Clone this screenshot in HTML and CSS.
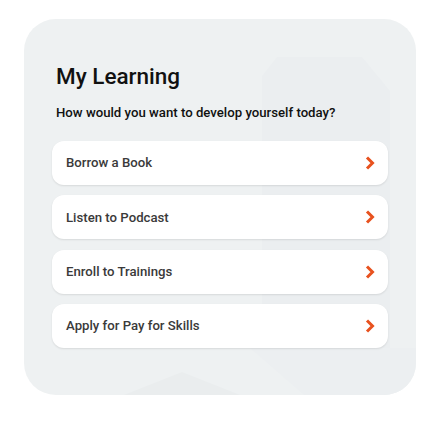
FILE: index.html
```html
<!DOCTYPE html>
<html lang="en">
<head>
<meta charset="utf-8">
<title>My Learning</title>
<link rel="stylesheet" href="styles.css">
</head>
<body>
<section class="card">
  <svg class="deco" width="392" height="376" viewBox="0 0 392 376" aria-hidden="true">
    <polygon points="238,57 253,38 338,38 366,72 366,376 300,376 238,300" fill="#ebeef0"/>
    <polygon points="100,376 158,353 216,376" fill="#eaedee"/>
    <polygon points="226,329 280,376 392,376 392,329" fill="#eceff1"/>
  </svg>
  <header class="head">
    <h1 class="title">My Learning</h1>
    <p class="subtitle">How would you want to develop yourself today?</p>
  </header>
  <ul class="list">
    <li class="item"><span class="label">Borrow a Book</span><svg class="chev" width="10" height="14" viewBox="0 0 10 14"><path d="M2 1.5 L7.5 7 L2 12.5" fill="none" stroke="#e8521f" stroke-width="3" stroke-linejoin="miter"/></svg></li>
    <li class="item"><span class="label">Listen to Podcast</span><svg class="chev" width="10" height="14" viewBox="0 0 10 14"><path d="M2 1.5 L7.5 7 L2 12.5" fill="none" stroke="#e8521f" stroke-width="3" stroke-linejoin="miter"/></svg></li>
    <li class="item"><span class="label">Enroll to Trainings</span><svg class="chev" width="10" height="14" viewBox="0 0 10 14"><path d="M2 1.5 L7.5 7 L2 12.5" fill="none" stroke="#e8521f" stroke-width="3" stroke-linejoin="miter"/></svg></li>
    <li class="item"><span class="label">Apply for Pay for Skills</span><svg class="chev" width="10" height="14" viewBox="0 0 10 14"><path d="M2 1.5 L7.5 7 L2 12.5" fill="none" stroke="#e8521f" stroke-width="3" stroke-linejoin="miter"/></svg></li>
  </ul>
</section>
</body>
</html>
```
FILE: styles.css
```css
* { box-sizing: border-box; }
html, body { margin: 0; padding: 0; background: #ffffff; }
body {
  font-family: Roboto, "Liberation Sans", sans-serif;
  width: 440px;
  height: 423px;
  overflow: hidden;
}
.card {
  position: relative;
  margin: 19px 0 0 24px;
  width: 392px;
  height: 376px;
  border-radius: 32px;
  background: #eef1f2;
  padding: 43.5px 28px 0 28px;
  overflow: hidden;
}
.deco {
  position: absolute;
  left: 0;
  top: 0;
  z-index: 0;
}
.head, .list { position: relative; z-index: 1; }
.head { padding-left: 4px; }
.title {
  margin: 0;
  font-size: 22.5px;
  line-height: 26px;
  font-weight: 500;
  color: #111111;
}
.subtitle {
  margin: 15.7px 0 0 0;
  font-size: 13.2px;
  line-height: 18px;
  font-weight: 500;
  color: #111111;
}
.list {
  list-style: none;
  margin: 18.8px 0 0 0;
  padding: 0;
  display: flex;
  flex-direction: column;
  gap: 10.33px;
}
.item {
  height: 44px;
  background: #ffffff;
  border-radius: 12px;
  box-shadow: 0 1px 2px rgba(0,0,0,0.10);
  display: flex;
  align-items: center;
  justify-content: space-between;
  padding: 0 13px 0 14px;
}
.label {
  font-size: 13.2px;
  font-weight: 500;
  color: #3a3a3a;
}
.chev { display: block; }
```
